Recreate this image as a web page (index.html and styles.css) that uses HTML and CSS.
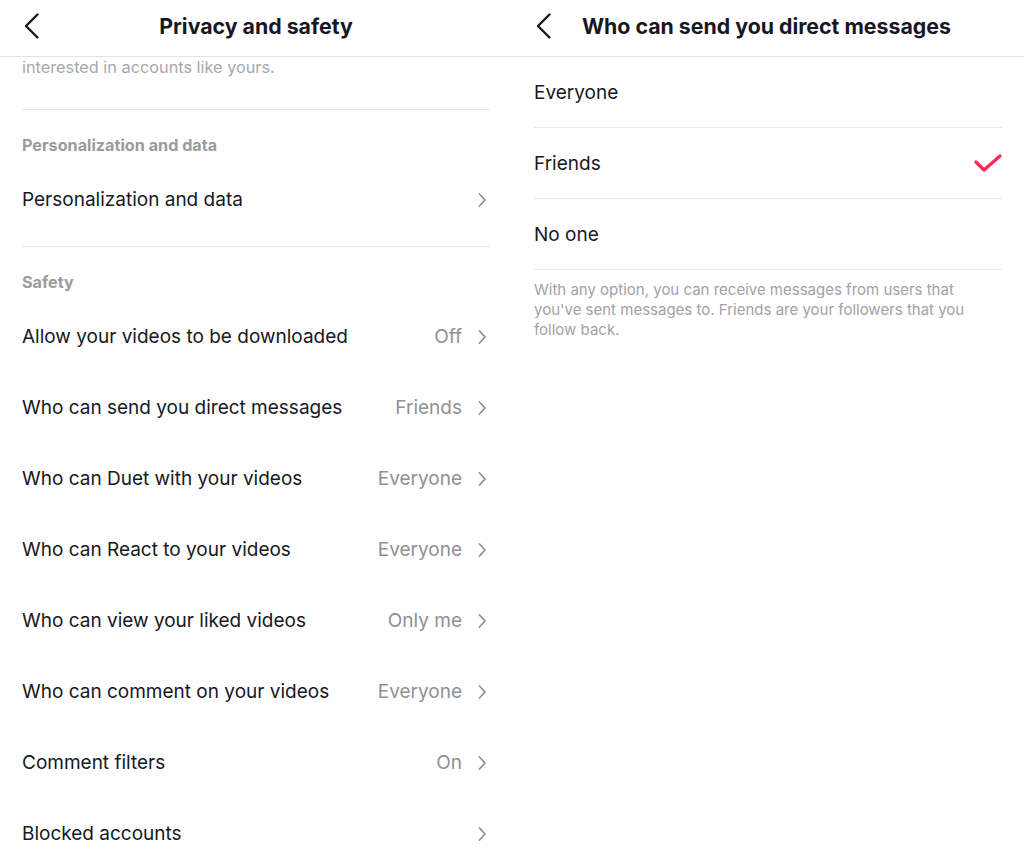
FILE: index.html
```html
<!DOCTYPE html>
<html lang="en">
<head>
    <meta charset="UTF-8">
    <meta name="viewport" content="width=device-width, initial-scale=1.0">
    <title>Privacy and safety</title>
    <link rel="stylesheet" href="styles.css">
</head>
<body>
    <div class="screens">
        <section class="screen">
            <header class="topbar topbar-center">
                <button class="back" aria-label="Back">
                    <svg width="20" height="28" viewBox="0 0 20 28"><path d="M15.5 2.5 L4 14 L15.5 25.5" fill="none" stroke="#161823" stroke-width="2.4" stroke-linecap="round" stroke-linejoin="round"/></svg>
                </button>
                <h1 class="title">Privacy and safety</h1>
            </header>
            <div class="content">
                <p class="desc">interested in accounts like yours.</p>

                <div class="group">
                    <h2 class="group-title">Personalization and data</h2>
                    <a class="row" href="#">
                        <span class="row-label">Personalization and data</span>
                        <svg class="chev" width="10" height="16" viewBox="0 0 10 16"><path d="M2.5 2 L8 8 L2.5 14" fill="none" stroke="#8f9095" stroke-width="1.8" stroke-linecap="round" stroke-linejoin="round"/></svg>
                    </a>
                </div>

                <div class="group last">
                    <h2 class="group-title">Safety</h2>
                    <a class="row" href="#">
                        <span class="row-label">Allow your videos to be downloaded</span>
                        <span class="row-value">Off</span>
                        <svg class="chev" width="10" height="16" viewBox="0 0 10 16"><path d="M2.5 2 L8 8 L2.5 14" fill="none" stroke="#8f9095" stroke-width="1.8" stroke-linecap="round" stroke-linejoin="round"/></svg>
                    </a>
                    <a class="row" href="#">
                        <span class="row-label">Who can send you direct messages</span>
                        <span class="row-value">Friends</span>
                        <svg class="chev" width="10" height="16" viewBox="0 0 10 16"><path d="M2.5 2 L8 8 L2.5 14" fill="none" stroke="#8f9095" stroke-width="1.8" stroke-linecap="round" stroke-linejoin="round"/></svg>
                    </a>
                    <a class="row" href="#">
                        <span class="row-label">Who can Duet with your videos</span>
                        <span class="row-value">Everyone</span>
                        <svg class="chev" width="10" height="16" viewBox="0 0 10 16"><path d="M2.5 2 L8 8 L2.5 14" fill="none" stroke="#8f9095" stroke-width="1.8" stroke-linecap="round" stroke-linejoin="round"/></svg>
                    </a>
                    <a class="row" href="#">
                        <span class="row-label">Who can React to your videos</span>
                        <span class="row-value">Everyone</span>
                        <svg class="chev" width="10" height="16" viewBox="0 0 10 16"><path d="M2.5 2 L8 8 L2.5 14" fill="none" stroke="#8f9095" stroke-width="1.8" stroke-linecap="round" stroke-linejoin="round"/></svg>
                    </a>
                    <a class="row" href="#">
                        <span class="row-label">Who can view your liked videos</span>
                        <span class="row-value">Only me</span>
                        <svg class="chev" width="10" height="16" viewBox="0 0 10 16"><path d="M2.5 2 L8 8 L2.5 14" fill="none" stroke="#8f9095" stroke-width="1.8" stroke-linecap="round" stroke-linejoin="round"/></svg>
                    </a>
                    <a class="row" href="#">
                        <span class="row-label">Who can comment on your videos</span>
                        <span class="row-value">Everyone</span>
                        <svg class="chev" width="10" height="16" viewBox="0 0 10 16"><path d="M2.5 2 L8 8 L2.5 14" fill="none" stroke="#8f9095" stroke-width="1.8" stroke-linecap="round" stroke-linejoin="round"/></svg>
                    </a>
                    <a class="row" href="#">
                        <span class="row-label">Comment filters</span>
                        <span class="row-value">On</span>
                        <svg class="chev" width="10" height="16" viewBox="0 0 10 16"><path d="M2.5 2 L8 8 L2.5 14" fill="none" stroke="#8f9095" stroke-width="1.8" stroke-linecap="round" stroke-linejoin="round"/></svg>
                    </a>
                    <a class="row" href="#">
                        <span class="row-label">Blocked accounts</span>
                        <svg class="chev" width="10" height="16" viewBox="0 0 10 16"><path d="M2.5 2 L8 8 L2.5 14" fill="none" stroke="#8f9095" stroke-width="1.8" stroke-linecap="round" stroke-linejoin="round"/></svg>
                    </a>
                </div>
            </div>
        </section>

        <section class="screen">
            <header class="topbar topbar-left">
                <button class="back" aria-label="Back">
                    <svg width="20" height="28" viewBox="0 0 20 28"><path d="M15.5 2.5 L4 14 L15.5 25.5" fill="none" stroke="#161823" stroke-width="2.4" stroke-linecap="round" stroke-linejoin="round"/></svg>
                </button>
                <h1 class="title">Who can send you direct messages</h1>
            </header>
            <div class="content">
                <div class="option">Everyone</div>
                <div class="option">
                    <span class="row-label">Friends</span>
                    <svg class="check" width="30" height="22" viewBox="0 0 30 22"><path d="M3 10 L11 18 L27 4" fill="none" stroke="#fe2c55" stroke-width="3.4" stroke-linecap="round" stroke-linejoin="round"/></svg>
                </div>
                <div class="option">No one</div>
                <p class="note">With any option, you can receive messages from users that you've sent messages to. Friends are your followers that you follow back.</p>
            </div>
        </section>
    </div>
</body>
</html>
```

FILE: styles.css
```css
* {
    box-sizing: border-box;
}
body {
    margin: 0;
    font-family: Inter, "Open Sans", sans-serif;
    color: #161823;
    background: #fff;
}
.screens {
    display: grid;
    grid-template-columns: 512px 512px;
    height: 866px;
    overflow: hidden;
}
.topbar {
    height: 57px;
    display: flex;
    align-items: center;
    padding: 0 22px 4px;
    border-bottom: 1px solid #e3e3e5;
}
.back {
    display: flex;
    width: 20px;
    height: 28px;
    padding: 0;
    border: 0;
    background: none;
}
.title {
    margin: 0;
    font-size: 21.3px;
    font-weight: 700;
    white-space: nowrap;
}
.topbar-center .title {
    flex: 1;
    text-align: center;
    margin-right: 20px;
}
.topbar-left .title {
    margin-left: 28px;
}
.content {
    padding: 0 22px;
}
.desc {
    margin: 0;
    padding-bottom: 32px;
    font-size: 16.3px;
    line-height: 20px;
    color: #a7a7ab;
    border-bottom: 1px solid #e8e8ea;
}
.group {
    padding-bottom: 11px;
    border-bottom: 1px solid #e8e8ea;
}
.group.last {
    border-bottom: 0;
}
.group-title {
    margin: 0;
    padding: 25px 0 9px;
    font-size: 16.2px;
    line-height: 20px;
    font-weight: 700;
    color: #9a9b9f;
}
.row {
    display: flex;
    align-items: center;
    height: 71px;
    font-size: 19px;
    color: inherit;
    text-decoration: none;
}
.row-label {
    flex: 1;
}
.row-value {
    margin-right: 15px;
    color: #8f9095;
}
.chev {
    margin-right: 3px;
}
.option {
    display: flex;
    align-items: center;
    height: 71px;
    font-size: 19px;
    border-bottom: 1px solid #ebebed;
}
.check {
    margin-right: -1px;
}
.note {
    margin: 0;
    padding-top: 10px;
    padding-right: 10px;
    font-size: 15px;
    line-height: 20px;
    color: #a2a2a7;
}
```
